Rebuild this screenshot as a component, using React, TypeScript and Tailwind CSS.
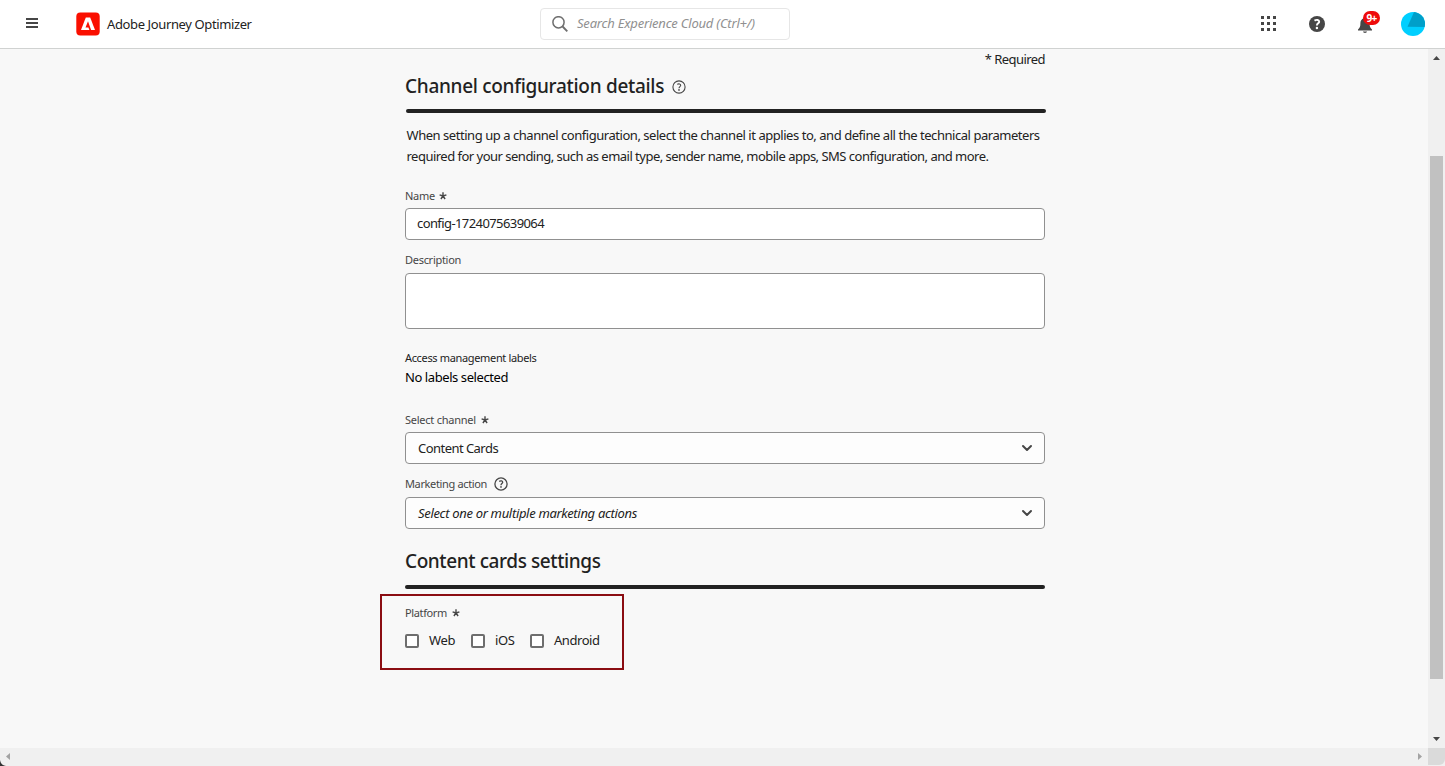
import type { ReactNode } from "react";

function Asterisk() {
  return (
    <svg className="h-[8px] w-[8px]" viewBox="0 0 8 8" fill="none" stroke="#464646" strokeWidth="1.4">
      <path d="M4 .3V4M4 4 .6 2.800M4 4l3.400-1.200M4 4 1.900 7M4 4l2.100 3" />
    </svg>
  );
}

function HelpRing({ stroke = 1.3 }: { stroke?: number }) {
  return (
    <svg className="h-[14px] w-[14px]" viewBox="0 0 14 14" fill="none" stroke="#464646">
      <circle cx="7" cy="7" r="6.1" strokeWidth={stroke} />
      <path d="M5.2 4.4c1.5-1 3.5-.6 3.5.9 0 1.2-1.7 1.4-1.7 2.9" strokeWidth={stroke} />
      <circle cx="7" cy="9.9" r=".85" fill="#464646" stroke="none" />
    </svg>
  );
}

function Chevron() {
  return (
    <svg className="h-[8px] w-[12px]" viewBox="0 0 12 8" fill="none" stroke="#464646" strokeWidth="2" strokeLinecap="round" strokeLinejoin="round">
      <path d="M2 2l4 4 4-4" />
    </svg>
  );
}

function Label({ children, extra }: { children: ReactNode; extra?: ReactNode }) {
  return (
    <div className="flex h-[16px] items-center text-[11px] leading-[16px] text-[#464646]">
      {children}
      {extra}
    </div>
  );
}

function Picker({ children }: { children: ReactNode }) {
  return (
    <div className="flex h-[32px] items-center justify-between rounded-[4px] border border-[#909090] bg-[#fdfdfd] pr-[11px] pl-[12px] text-[13px] text-[#222222]">
      {children}
      <Chevron />
    </div>
  );
}

function Checkbox({ children }: { children: ReactNode }) {
  return (
    <div className="flex h-[18px] items-center gap-[10px] text-[13px] leading-[18px] text-[#222222]">
      <span className="h-[14px] w-[14px] rounded-[2px] border-2 border-[#6e6e6e] bg-white" />
      {children}
    </div>
  );
}

function Header() {
  return (
    <header className="flex h-[49px] shrink-0 items-center border-b border-[#d0d2d1] bg-white">
      <div className="flex w-[540px] items-center pl-[26px]">
        <svg className="mb-[2px] h-[12px] w-[12px]" viewBox="0 0 12 12" fill="#464646">
          <path d="M0 1h12v2H0zM0 5h12v2H0zM0 9h12v2H0z" />
        </svg>
        <svg className="ml-[38px] h-[24px] w-[24px]" viewBox="0 0 24 24">
          <rect x=".3" y=".6" width="23.4" height="22.8" rx="4" fill="#fa0f00" />
          <path d="M9.800 5.400h4.400L19 18H5z" fill="#fff" />
          <path d="M12 9.200 15.200 18.200H13.500L12.400 15.400H9.500z" fill="#fa0f00" />
        </svg>
        <span className="ml-[7px] pt-[2px] text-[13px] tracking-[-0.38px] whitespace-nowrap text-[#222222]">Adobe Journey Optimizer</span>
      </div>
      <div className="flex h-[32px] w-[250px] items-center rounded-[4px] border border-[#e6e6e6] pl-[11px]">
        <svg className="h-[16px] w-[16px]" viewBox="0 0 16 16" fill="none" stroke="#6e6e6e">
          <circle cx="6.5" cy="6.3" r="5.6" strokeWidth="1.5" />
          <path d="m10.6 10.5 4.7 4.8" strokeWidth="1.9" />
        </svg>
        <span className="ml-[9px] text-[13px] tracking-[-0.2px] whitespace-nowrap text-[#909090] italic">Search Experience Cloud (Ctrl+/)</span>
      </div>
      <div className="flex flex-1 items-center justify-end pr-[20px]">
        <svg className="mb-px h-[15px] w-[15px]" viewBox="0 0 15 15" fill="#464646">
          <path d="M0 0h3v3H0zM6 0h3v3H6zM12 0h3v3h-3zM0 6h3v3H0zM6 6h3v3H6zM12 6h3v3h-3zM0 12h3v3H0zM6 12h3v3H6zM12 12h3v3h-3z" />
        </svg>
        <svg className="ml-[33px] h-[16px] w-[16px]" viewBox="0 0 16 16">
          <circle cx="8" cy="8" r="8" fill="#464646" />
          <path d="M5.500 4.600c2.100-1.300 4.700-.8 4.700 1.100 0 1.600-2.300 1.700-2.300 3.700" fill="none" stroke="#fff" strokeWidth="1.900" />
          <circle cx="7.900" cy="12" r="1.200" fill="#fff" />
        </svg>
        <div className="relative mt-[2px] ml-[33px] h-[16px] w-[14px]">
          <svg className="h-[16px] w-[14px]" viewBox="0 0 14 16" fill="#464646">
            <path d="M7 0c.8 0 1.300.5 1.300 1.300C10.500 2 11.600 4 11.600 6.300c0 3.400.6 4.800 2.400 6.200V13.500H0v-1c1.800-1.400 2.400-2.800 2.400-6.200C2.400 4 3.500 2 5.700 1.300 5.700.5 6.200 0 7 0zM5 14.600h4c-.2 1-1 1.400-2 1.400s-1.800-.4-2-1.400z" />
          </svg>
          <span className="absolute top-[-6px] left-[5px] flex h-[14px] w-[17px] items-center justify-center rounded-[7px] bg-[#ee0b0b] text-[10px] leading-[14px] font-bold tracking-[-0.6px] text-white">9+</span>
        </div>
        <svg className="ml-[29px] h-[24px] w-[24px]" viewBox="0 0 24 24">
          <defs>
            <clipPath id="disc"><circle cx="12" cy="12" r="12" /></clipPath>
          </defs>
          <g clipPath="url(#disc)">
            <path d="M0 0h24v24H0z" fill="#00cfff" />
            <path d="M13 0h11v15L6.500 14.800z" fill="#009fc9" />
          </g>
        </svg>
      </div>
    </header>
  );
}

export default function App() {
  return (
    <div className="flex h-[766px] w-[1445px] flex-col overflow-hidden bg-[#f8f8f8] font-['Noto_Sans',sans-serif]">
      <Header />
      <div className="flex h-[699px] shrink-0">
        <main className="flex-1 pl-[405px]">
          <div className="w-[640px] whitespace-nowrap">
            <div className="flex h-[20px] items-center justify-end pt-[2px] text-[13px] tracking-[-0.55px] text-[#222222]">* Required</div>
            <h1 className="flex h-[34px] items-center text-[19px] font-medium tracking-[-0.3px] text-[#222222]">
              Channel configuration details
              <span className="ml-[8px] pt-[2px]"><HelpRing stroke={1.1} /></span>
            </h1>
            <div className="mt-[6px] ml-px h-[4px] w-[640px] rounded-[2px] bg-[#222222]" />
            <div className="mt-[12px] ml-[1.5px] text-[13px] leading-[21px] text-[#222222]">
              <p className="tracking-[-0.457px]">When setting up a channel configuration, select the channel it applies to, and define all the technical parameters</p>
              <p className="tracking-[-0.51px]">required for your sending, such as email type, sender name, mobile apps, SMS configuration, and more.</p>
            </div>

            <div className="mt-[21px]">
              <Label extra={<span className="ml-[4px]"><Asterisk /></span>}><span className="tracking-[-0.25px]">Name</span></Label>
            </div>
            <div className="mt-[4px] flex h-[32px] items-center rounded-[4px] border border-[#909090] bg-white pl-[11px] text-[13px] tracking-[-0.59px] text-[#222222]">config-1724075639064</div>

            <div className="mt-[12px]">
              <Label><span className="tracking-[-0.29px]">Description</span></Label>
            </div>
            <div className="mt-[5px] h-[56px] rounded-[4px] border border-[#909090] bg-white" />

            <div className="mt-[21px] h-[16px] text-[11px] leading-[16px] tracking-[-0.345px] text-[#222222]">Access management labels</div>
            <div className="mt-[2px] h-[18px] text-[13px] leading-[18px] tracking-[-0.42px] text-black">No labels selected</div>

            <div className="mt-[26px]">
              <Label extra={<span className="ml-[5px]"><Asterisk /></span>}><span className="tracking-[-0.24px]">Select channel</span></Label>
            </div>
            <div className="mt-[4px]">
              <Picker><span className="pt-[2px] tracking-[-0.54px]">Content Cards</span></Picker>
            </div>

            <div className="mt-[12px]">
              <Label extra={<span className="ml-[7px]"><HelpRing /></span>}><span className="tracking-[-0.36px]">Marketing action</span></Label>
            </div>
            <div className="mt-[5px]">
              <Picker><span className="pt-[2px] tracking-[-0.32px] italic">Select one or multiple marketing actions</span></Picker>
            </div>

            <h2 className="mt-[16px] h-[32px] text-[19px] leading-[32px] font-medium tracking-[-0.405px] text-[#222222]">Content cards settings</h2>
            <div className="mt-[8px] h-[4px] rounded-[2px] bg-[#222222]" />
            <section className="mt-[5px] ml-[-25px] h-[76px] w-[244px] border-2 border-[#8b0d12] pt-[9px] pl-[23px]">
              <Label extra={<span className="ml-[5px]"><Asterisk /></span>}><span className="tracking-[-0.37px]">Platform</span></Label>
              <div className="mt-[11px] flex gap-[16px]">
                <Checkbox><span className="w-[26px] pb-[2px] tracking-[-0.39px]">Web</span></Checkbox>
                <Checkbox><span className="w-[19px] pb-[2px] tracking-[-0.4px]">iOS</span></Checkbox>
                <Checkbox><span className="pb-[2px] tracking-[-0.45px]">Android</span></Checkbox>
              </div>
            </section>
          </div>
        </main>
        <div className="flex w-[17px] flex-col items-center justify-between bg-[#f0f0f0] py-[7px]">
          <svg className="h-[4px] w-[7px]" viewBox="0 0 7 4" fill="#464646"><path d="M3.500 0 7 4H0z" /></svg>
          <div className="mt-[38px] h-[523px] w-[13px] bg-[#c1c1c1]" />
          <svg className="h-[4px] w-[7px]" viewBox="0 0 7 4" fill="#464646"><path d="M0 0h7L3.500 4z" /></svg>
        </div>
      </div>
      <div className="relative flex h-[18px] shrink-0 bg-[#f0f0f0]">
        <svg className="absolute bottom-0 left-0 h-[6px] w-[6px]" viewBox="0 0 6 6"><path d="M0 0c.5 3.500 2.500 5.500 6 6H0z" fill="#333333" /></svg>
        <div className="flex flex-1 items-center justify-between pr-[6px] pb-px pl-[6px]">
          <svg className="h-[7px] w-[4px]" viewBox="0 0 4 7" fill="#a3a3a3"><path d="M4 0v7L0 3.500z" /></svg>
          <svg className="h-[7px] w-[4px]" viewBox="0 0 4 7" fill="#a3a3a3"><path d="M0 0v7l4-3.500z" /></svg>
        </div>
        <div className="h-[17px] w-[17px] rounded-br-[6px] bg-[#dadada]" />
      </div>
    </div>
  );
}
